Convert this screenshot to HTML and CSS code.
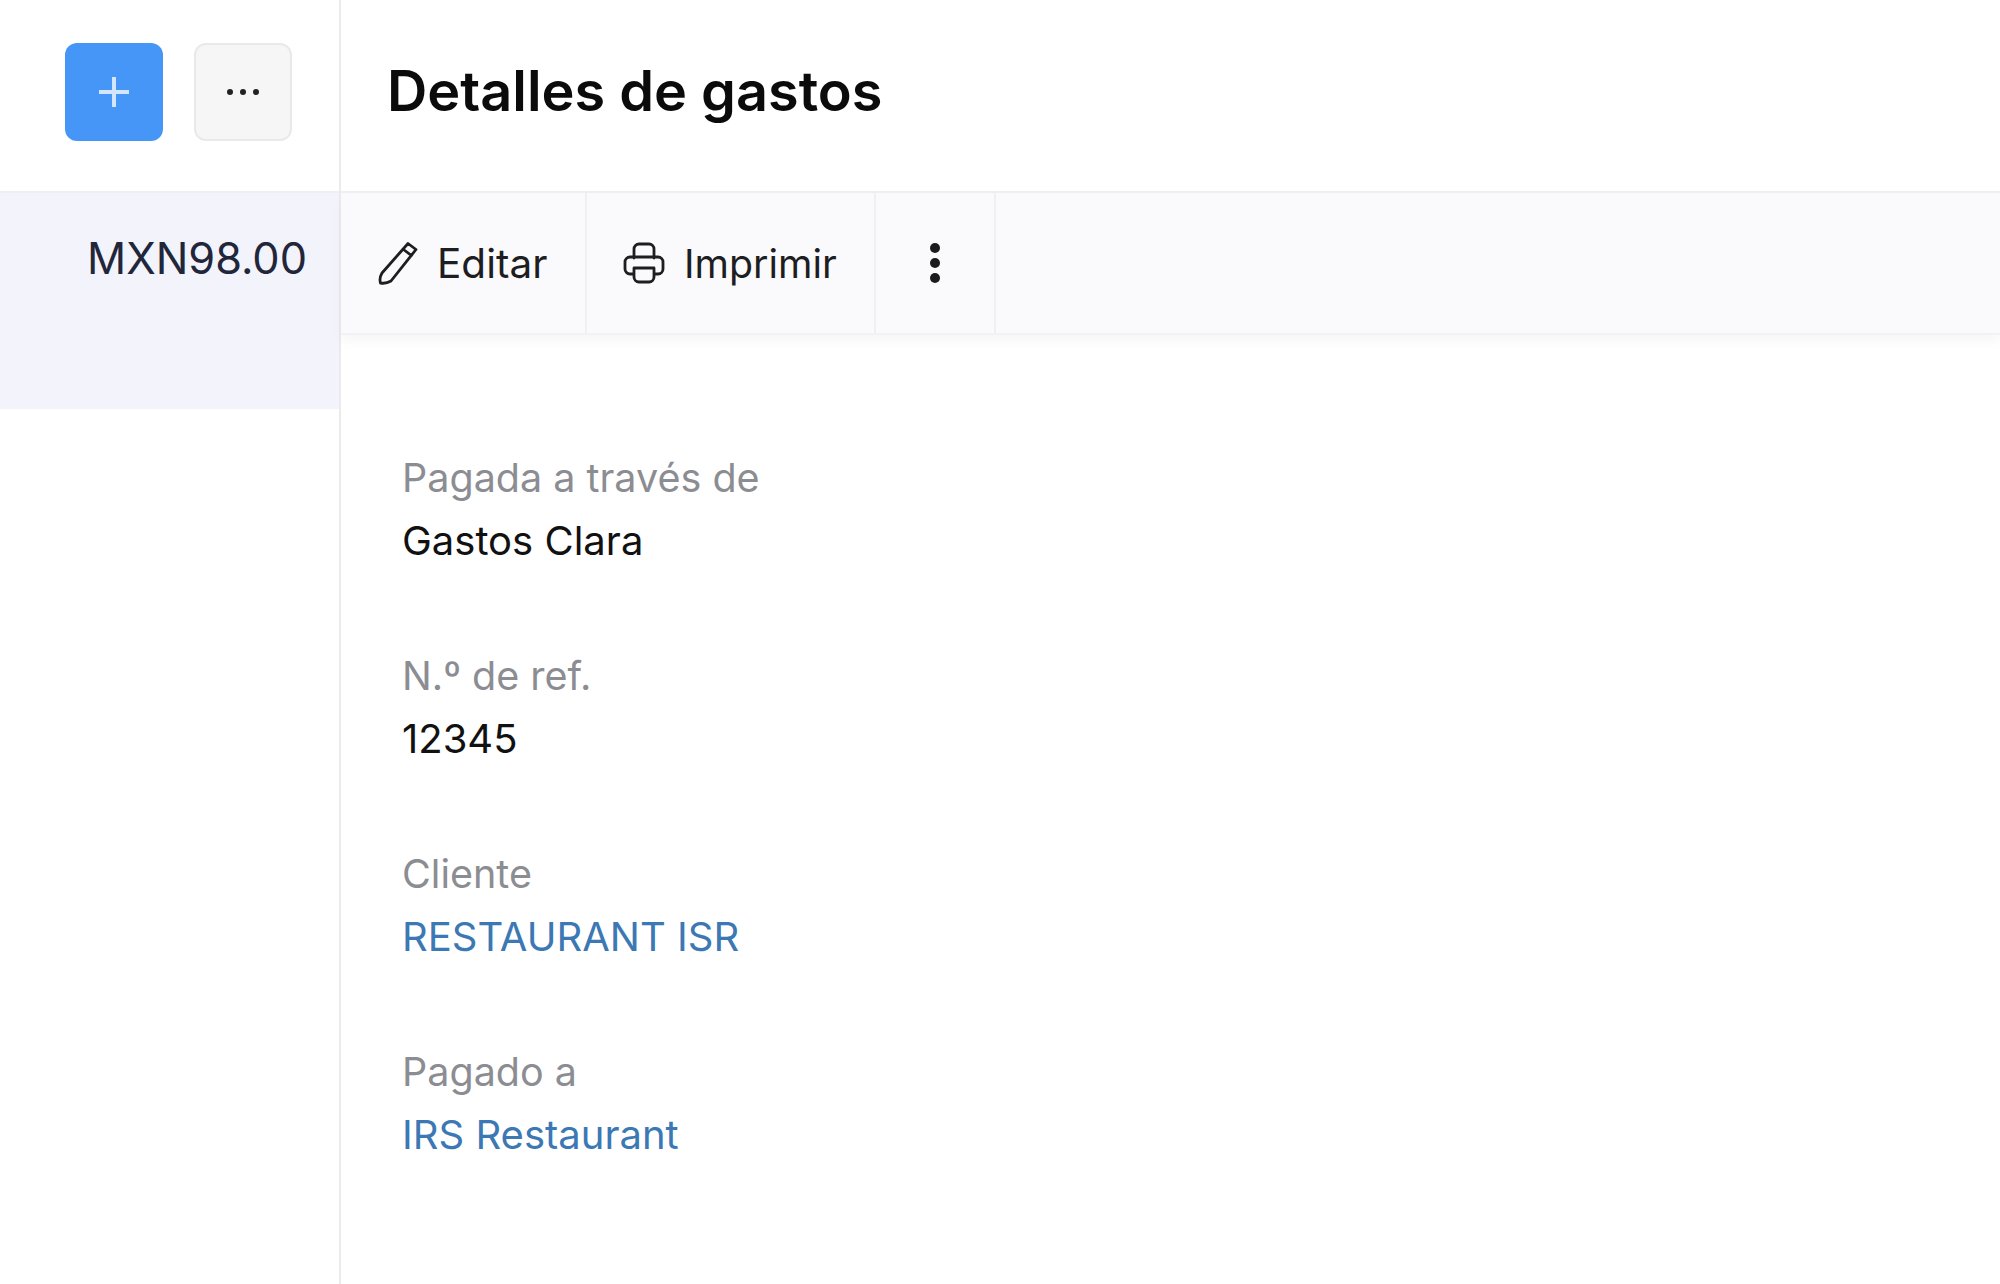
FILE: index.html
```html
<!DOCTYPE html>
<html lang="es">
<head>
  <meta charset="UTF-8" />
  <title>Detalles de gastos</title>
  <link rel="stylesheet" href="styles.css">
</head>
<body>
  <div class="app">
    <aside class="lista">
      <div class="lista-acciones">
        <button class="btn-cuadro btn-nuevo">
          <svg viewBox="0 0 40 40" width="40" height="40"><path d="M20 5v30M5 20h30" /></svg>
        </button>
        <button class="btn-cuadro btn-mas">
          <svg viewBox="0 0 40 40" width="40" height="40"><circle cx="7" cy="20" r="3" /><circle cx="20" cy="20" r="3" /><circle cx="33" cy="20" r="3" /></svg>
        </button>
      </div>
      <div class="lista-fila">MXN98.00</div>
    </aside>

    <main class="detalle">
      <header class="detalle-titulo">
        <h1>Detalles de gastos</h1>
      </header>

      <nav class="barra">
        <button class="barra-btn btn-editar">
          <svg viewBox="0 0 44 44" width="44" height="44"><path d="M33 2.500 L41 8.500 L16 40 Q11 43 5.500 42 Q4 37 7 32 Z M28.500 8.500 L36.500 14.500" /></svg>
          Editar
        </button>
        <button class="barra-btn btn-imprimir">
          <svg viewBox="0 0 44 44" width="44" height="44"><path d="M12 17V8a5 5 0 0 1 5-5h10a5 5 0 0 1 5 5v9M12 33H8a5 5 0 0 1-5-5v-7a5 5 0 0 1 5-5h28a5 5 0 0 1 5 5v7a5 5 0 0 1-5 5h-4M12 27h20v9a5 5 0 0 1-5 5H17a5 5 0 0 1-5-5z" /></svg>
          Imprimir
        </button>
        <button class="barra-btn btn-puntos">
          <svg viewBox="0 0 14 44" width="14" height="44"><circle cx="7" cy="7" r="5" /><circle cx="7" cy="22" r="5" /><circle cx="7" cy="37" r="5" /></svg>
        </button>
      </nav>

      <section class="datos">
        <div class="dato">
          <div class="etiqueta">Pagada a través de</div>
          <div class="valor">Gastos Clara</div>
        </div>
        <div class="dato">
          <div class="etiqueta">N.º de ref.</div>
          <div class="valor">12345</div>
        </div>
        <div class="dato">
          <div class="etiqueta">Cliente</div>
          <a class="valor enlace" href="#">RESTAURANT ISR</a>
        </div>
        <div class="dato">
          <div class="etiqueta">Pagado a</div>
          <a class="valor enlace" href="#">IRS Restaurant</a>
        </div>
      </section>
    </main>
  </div>
</body>
</html>
```

FILE: styles.css
```css
html, body {
  margin: 0;
  height: 100%;
  overflow: hidden;
  background: #fff;
}
body {
  font-family: Inter, "Liberation Sans", sans-serif;
  color: #111;
}
button {
  font-family: inherit;
  cursor: pointer;
}

.app {
  display: flex;
  height: 1284px;
}

/* Columna izquierda */
.lista {
  width: 339px;
  flex-shrink: 0;
  border-right: 2px solid #ebebee;
}
.lista-acciones {
  display: flex;
  gap: 31px;
  height: 193px;
  padding: 43px 0 0 65px;
  box-sizing: border-box;
  border-bottom: 2px solid #efeff2;
}
.btn-cuadro {
  display: flex;
  align-items: center;
  justify-content: center;
  width: 98px;
  height: 98px;
  padding: 0;
  border-radius: 12px;
}
.btn-nuevo {
  background: #4596f7;
  border: none;
}
.btn-nuevo path {
  stroke: #d3e6fd;
  stroke-width: 4;
  fill: none;
}
.btn-mas {
  background: #f6f6f7;
  border: 2px solid #e9e9ec;
}
.btn-mas circle {
  fill: #222;
}
.lista-fila {
  height: 216px;
  box-sizing: border-box;
  padding: 41px 32px 0 0;
  background: #f3f3fb;
  text-align: right;
  font-size: 43.300px;
  line-height: 48px;
  color: #22263a;
}

/* Detalle */
.detalle {
  flex: 1;
}
.detalle-titulo {
  display: flex;
  align-items: center;
  height: 193px;
  padding: 0 0 10px 46px;
  box-sizing: border-box;
  border-bottom: 2px solid #efeff2;
}
.detalle-titulo h1 {
  margin: 0;
  font-size: 55.800px;
  font-weight: 600;
  color: #0b0b0b;
}

.barra {
  display: flex;
  height: 142px;
  box-sizing: border-box;
  background: #fafafc;
  box-shadow: 0 7px 10px rgba(0, 0, 0, 0.035);
  border-bottom: 2px solid #f2f2f4;
}
.barra-btn {
  display: flex;
  align-items: center;
  gap: 18px;
  padding: 0;
  background: none;
  border: none;
  border-right: 2px solid #f0f0f3;
  font-size: 40.500px;
  color: #1d1d22;
}
.barra-btn svg path {
  fill: none;
  stroke: #1d1d22;
  stroke-width: 2.800;
  stroke-linejoin: round;
  stroke-linecap: round;
}
.barra-btn svg circle {
  fill: #1a1a1f;
}
.btn-editar {
  width: 246px;
  padding-left: 34px;
}
.btn-imprimir {
  width: 289px;
  padding-left: 35px;
  font-size: 39.300px;
}
.btn-puntos {
  width: 120px;
  justify-content: center;
}

.datos {
  padding: 121px 0 0 61px;
}
.dato {
  margin-bottom: 90px;
}
.etiqueta {
  font-size: 39.500px;
  line-height: 44px;
  color: #8b8d92;
}
.valor {
  display: block;
  margin-top: 18px;
  font-size: 40px;
  line-height: 46px;
  color: #111;
}
.enlace {
  color: #3b78b4;
  text-decoration: none;
}
```
